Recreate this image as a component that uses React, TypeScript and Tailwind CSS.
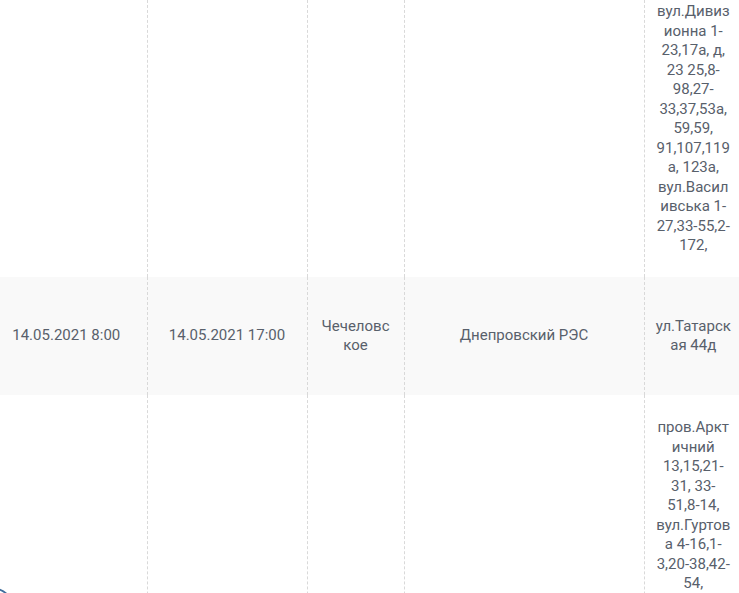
import React from 'react';

type Row = {
  start: string;
  end: string;
  place: string;
  res: string;
  streets: string;
  striped?: boolean;
  height: string;
  streetsAlign?: string;
};

const rows: Row[] = [
  {
    start: '',
    end: '',
    place: '',
    res: '',
    streets:
      'вул.Дивизионна 1-23,17а, д, 23 25,8-98,27-33,37,53а, 59,59, 91,107,119а, 123а, вул.Василивська 1-27,33-55,2-172,',
    height: 'h-[277px]',
    streetsAlign: 'align-top pt-[2px]',
  },
  {
    start: '14.05.2021 8:00',
    end: '14.05.2021 17:00',
    place: 'Чечеловское',
    res: 'Днепровский РЭС',
    streets: 'ул.Татарская 44д',
    striped: true,
    height: 'h-[118px]',
  },
  {
    start: '',
    end: '',
    place: '',
    res: '',
    streets:
      'пров.Арктичний 13,15,21-31, 33-51,8-14, вул.Гуртова 4-16,1-3,20-38,42-54,',
    height: 'h-[260px]',
    streetsAlign: 'align-top pt-[23px]',
  },
];

const cell = 'px-[11px] text-center align-middle break-words';
const divider = 'border-r border-dashed border-[#d9d9d9]';

export default function App() {
  return (
    <div className="relative w-[739px] h-[593px] overflow-hidden bg-white font-['Roboto',sans-serif] text-[15px] leading-[19.5px] text-[#58606b]">
      <table className="table-fixed border-collapse w-[756px] -ml-[14px]">
        <colgroup>
          <col className="w-[161px]" />
          <col className="w-[160px]" />
          <col className="w-[97px]" />
          <col className="w-[240px]" />
          <col className="w-[98px]" />
        </colgroup>
        <tbody>
          {rows.map((r, i) => (
            <tr key={i} className={`${r.height} ${r.striped ? 'bg-[#f9f9f9]' : 'bg-white'}`}>
              <td className={`${cell} ${divider}`}>{r.start}</td>
              <td className={`${cell} ${divider}`}>{r.end}</td>
              <td className={`${cell} ${divider}`}>{r.place}</td>
              <td className={`${cell} ${divider}`}>{r.res}</td>
              <td className={`px-[11px] text-center break-words ${r.streetsAlign ?? 'align-middle'}`}>
                {r.streets}
              </td>
            </tr>
          ))}
        </tbody>
      </table>

      {/* edge of a floating round button, mostly off-screen */}
      <div className="absolute left-[-22px] top-[588px] w-[34px] h-[34px] rounded-full border-2 border-[#3f6d9c] bg-white" />
    </div>
  );
}
